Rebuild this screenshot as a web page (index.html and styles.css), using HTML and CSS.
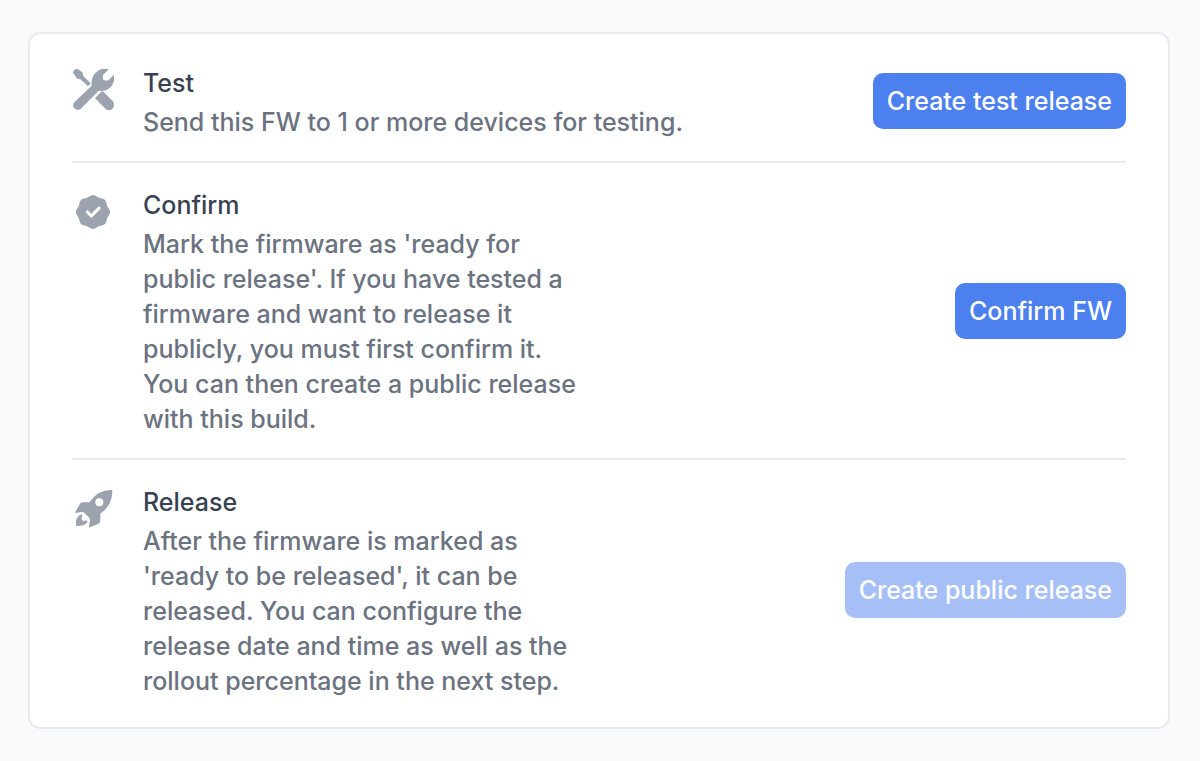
FILE: index.html
```html
<!DOCTYPE html>
<html lang="en">
<head>
<meta charset="utf-8">
<meta name="viewport" content="width=device-width, initial-scale=1">
<title>Firmware release</title>
<link rel="stylesheet" href="styles.css">
</head>
<body>
<main class="card">
  <section class="step">
    <svg class="icon" viewBox="36 42 126 126" aria-hidden="true">
      <path d="M40 49L47 42Q50 41 53 42L67 52Q69 54 69 62L92 85L84 94L60 72Q53 72 50 69L39 53Q38 51 40 49Z"/>
      <path d="M43 142L95 92C92 63 111 38 142 40Q146 41 144 45L129 60Q127 73 131 75Q143 78 146 75L160 61Q163 60 163 64C165 93 140 112 116 107L64 160C52 173 31 155 43 142Z"/>
      <path d="M105 130L127 107L158 138C171 152 153 173 138 163Z"/>
    </svg>
    <div class="text">
      <h2 class="title">Test</h2>
      <p class="desc">Send this FW to 1 or more devices for testing.</p>
    </div>
    <button class="btn" type="button">Create test release</button>
  </section>
  <section class="step">
    <svg class="icon" viewBox="0 0 20 20" aria-hidden="true">
      <path d="M6.267 3.455a3.066 3.066 0 001.745-.723 3.066 3.066 0 013.976 0 3.066 3.066 0 001.745.723 3.066 3.066 0 012.812 2.812c.051.643.304 1.254.723 1.745a3.066 3.066 0 010 3.976 3.066 3.066 0 00-.723 1.745 3.066 3.066 0 01-2.812 2.812 3.066 3.066 0 00-1.745.723 3.066 3.066 0 01-3.976 0 3.066 3.066 0 00-1.745-.723 3.066 3.066 0 01-2.812-2.812 3.066 3.066 0 00-.723-1.745 3.066 3.066 0 010-3.976 3.066 3.066 0 00.723-1.745 3.066 3.066 0 012.812-2.812z"/>
      <path class="check" d="M7.3 10L9.2 11.9L12.9 8.2"/>
    </svg>
    <div class="text">
      <h2 class="title">Confirm</h2>
      <p class="desc narrow">Mark the firmware as 'ready for public release'. If you have tested a firmware and want to release it publicly, you must first confirm it. You can then create a public release with this build.</p>
    </div>
    <button class="btn" type="button">Confirm FW</button>
  </section>
  <section class="step">
    <svg class="icon" viewBox="36 39 126 126" aria-hidden="true">
      <path fill-rule="evenodd" d="M154 45C128 45 104 57 89 82L68 82Q61 83 58 89L46 111Q45 115 49 114L62 111Q70 110 74 114L89 130Q91 134 89 141L87 153Q87 158 91 156L113 148Q121 145 121 136L121 116C145 100 157 76 157 48Q157 45 154 45ZM118 70A12 12 0 1 1 118 94A12 12 0 1 1 118 70Z"/>
      <path d="M61 119C51 124 47 136 48 151Q48 153 51 153C65 153 76 151 82 142Q84 136 78 136Q71 140 66 135Q62 130 67 123Q67 117 61 119Z"/>
    </svg>
    <div class="text">
      <h2 class="title">Release</h2>
      <p class="desc narrow">After the firmware is marked as 'ready to be released', it can be released. You can configure the release date and time as well as the rollout percentage in the next step.</p>
    </div>
    <button class="btn" type="button" disabled>Create public release</button>
  </section>
</main>
</body>
</html>
```
FILE: styles.css
```css
* { box-sizing: border-box; }

body {
  margin: 0;
  padding: 32px 30px 32px 28px;
  background: #f9fafc;
  font-family: Inter, "Liberation Sans", sans-serif;
  font-size: 25px;
  line-height: 35px;
  font-weight: 450;
}

.card {
  background: #fff;
  border: 2px solid #e8eaee;
  border-radius: 12px;
  padding: 7px 42px;
}

.step {
  display: flex;
  align-items: center;
  padding: 21px 0;
}

.step + .step { border-top: 2px solid #e8eaee; }

.icon {
  flex: none;
  align-self: flex-start;
  width: 42px;
  height: 42px;
  margin-top: 7px;
  margin-right: 29px;
  fill: #9ca3af;
}

.check {
  fill: none;
  stroke: #fff;
  stroke-width: 1.5;
  stroke-linecap: round;
  stroke-linejoin: round;
}

.text {
  flex: 1;
  padding-top: 4px;
}

.title {
  margin: 0 0 4px;
  font-size: inherit;
  font-weight: inherit;
  color: #374151;
}

.desc {
  margin: 0;
  color: #6b7280;
}

.narrow { max-width: 435px; }

.btn {
  flex: none;
  margin-left: 24px;
  padding: 10px 14px;
  border: 0;
  border-radius: 10px;
  background: #4c80ee;
  color: #fff;
  font: inherit;
  line-height: 36px;
}

.btn:disabled { background: #a6bff7; }
```
